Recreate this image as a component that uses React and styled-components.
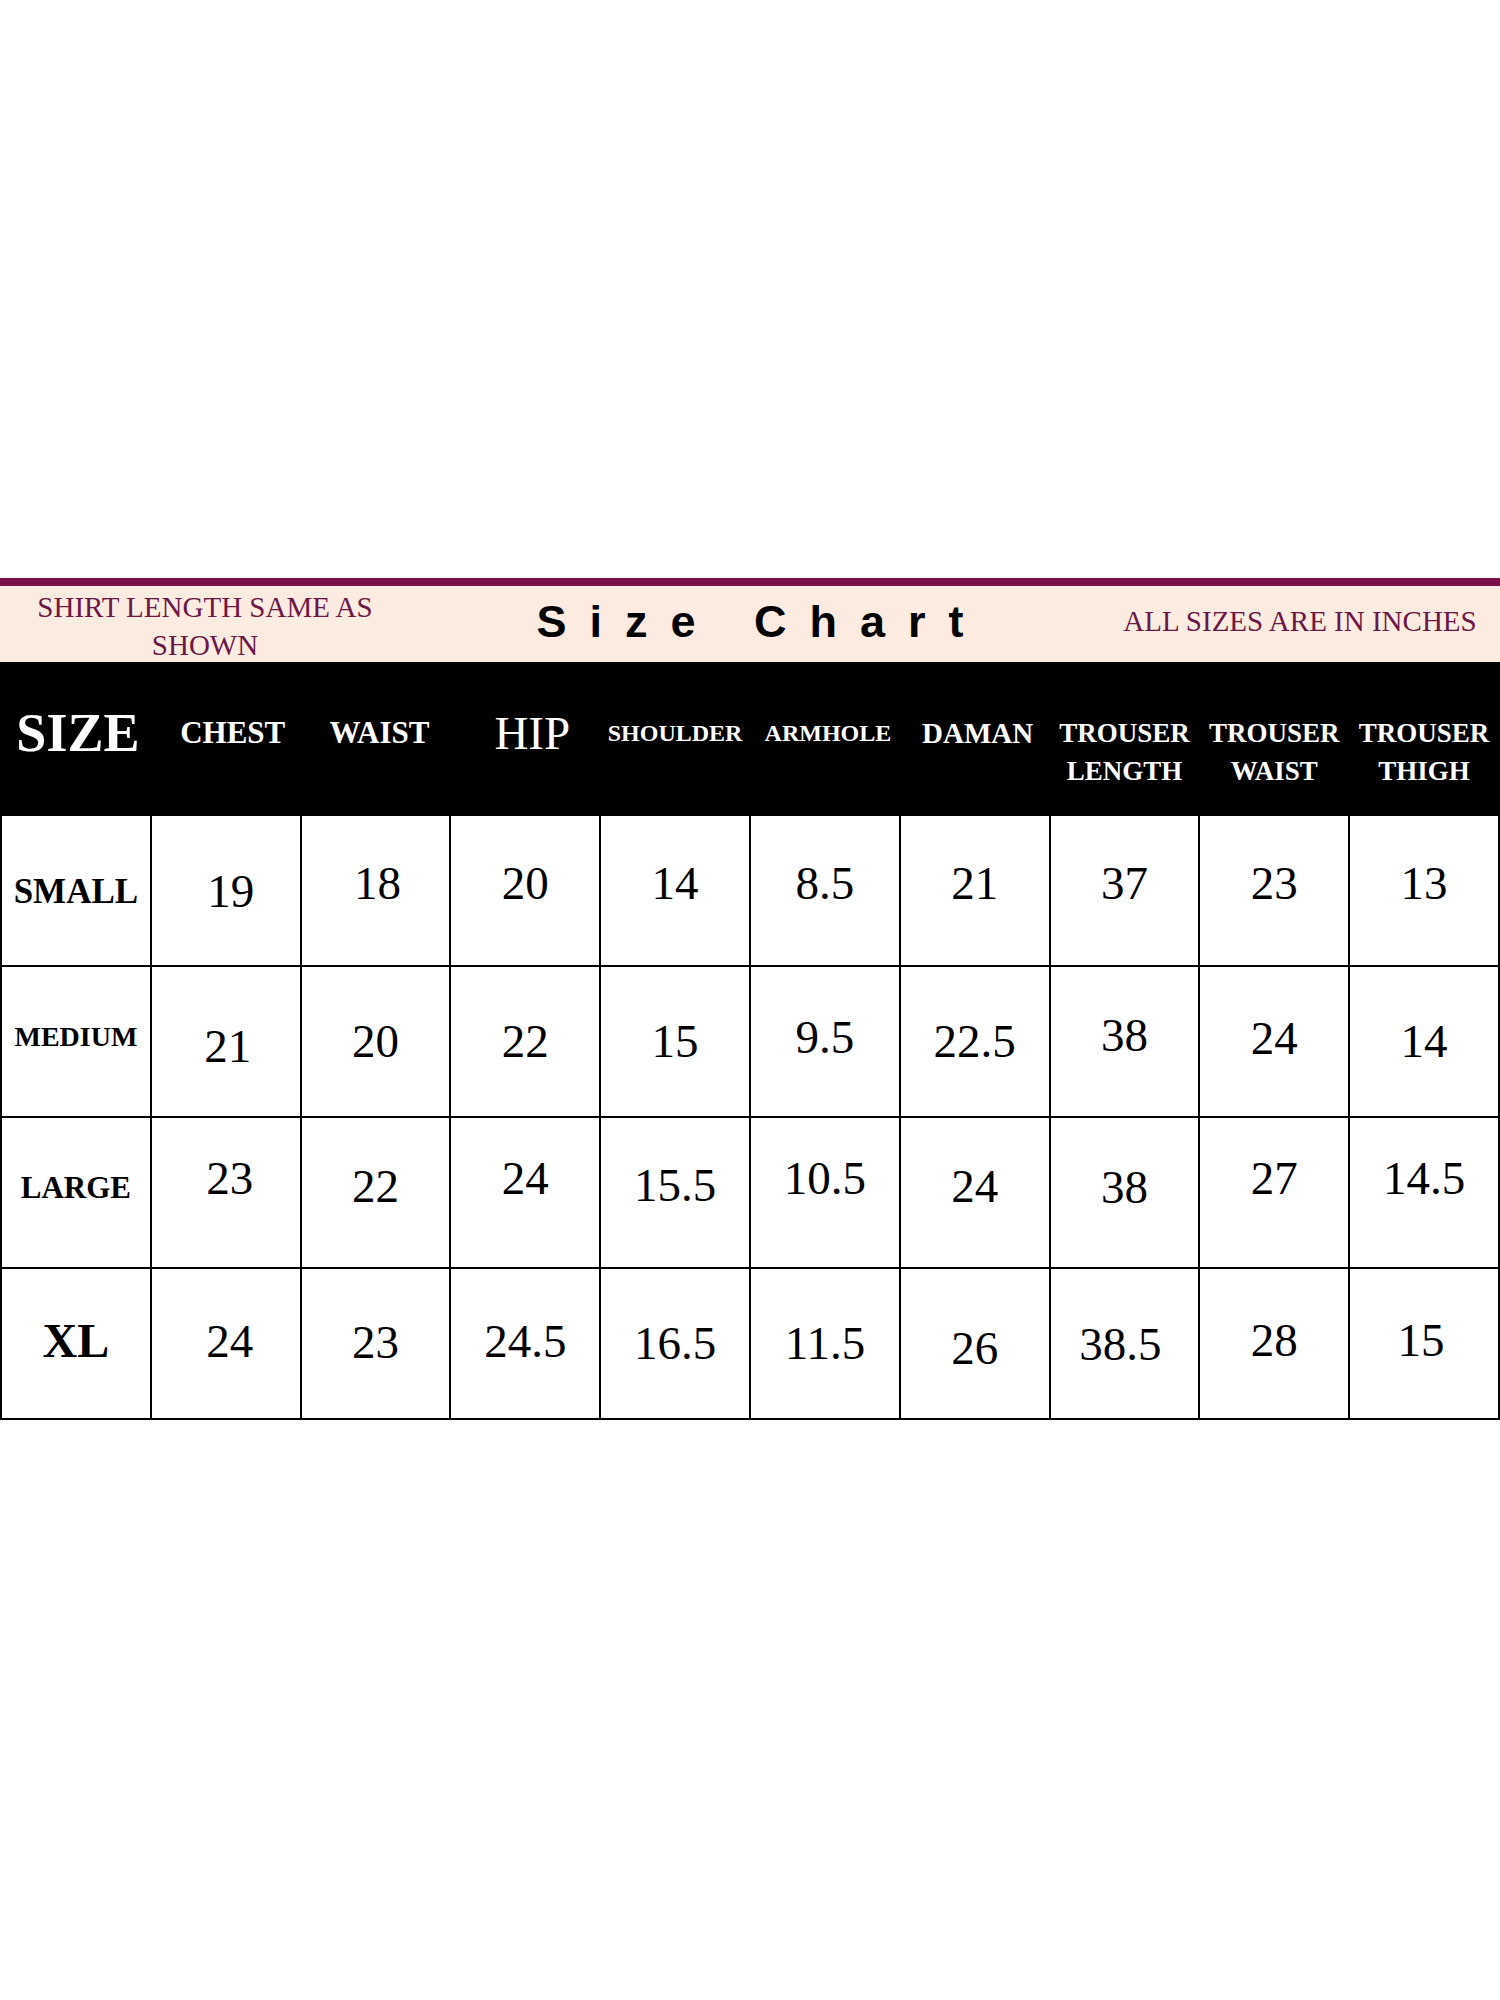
import React from 'react'
import styled, { createGlobalStyle } from 'styled-components'

const GlobalStyle = createGlobalStyle`
  html, body {
    margin: 0;
    padding: 0;
    background: #ffffff;
  }
  body {
    font-family: 'Liberation Serif', 'Times New Roman', serif;
  }
`

const purple = '#7b0f4b'
const ink = '#6d1747'

const Page = styled.div`
  width: 1500px;
  padding-top: 578px;
  padding-bottom: 580px;
`

const TopRule = styled.div`
  height: 8px;
  background: ${purple};
`

const Banner = styled.div`
  display: grid;
  grid-template-columns: 410px 1fr 400px;
  grid-template-rows: 76px;
  align-items: center;
  height: 76px;
  background: #fcebe0;
`

const Note = styled.div`
  text-align: center;
  font-family: 'Liberation Serif', 'Times New Roman', serif;
  font-size: 29px;
  line-height: 38px;
  color: ${ink};
  transform: translateY(${(p) => p.$shift || 0}px);
`

const Title = styled.div`
  text-align: center;
  padding-left: 13px;
  font-family: 'Liberation Sans', Arial, sans-serif;
  font-weight: 700;
  font-size: 45px;
  letter-spacing: 23px;
  color: #000;
  line-height: 1;
  padding-bottom: 6px;
`

const Table = styled.div`
  display: grid;
  grid-template-columns: repeat(10, 1fr);
  grid-template-rows: 152px repeat(4, 149px);
  gap: 2px;
  padding: 0 2px 2px 2px;
  background: #000;
`

const HeadCell = styled.div`
  display: flex;
  justify-content: center;
  align-items: flex-start;
  padding-top: 52px;
  background: #000;
`

const HeadLabel = styled.span`
  display: block;
  text-align: center;
  color: #fff;
  font-family: 'Liberation Serif', 'Times New Roman', serif;
  font-size: ${(p) => p.$size}px;
  font-weight: ${(p) => (p.$bold ? 700 : 400)};
  line-height: 38px;
  white-space: nowrap;
  transform: translateX(${(p) => p.$dx || 0}px);
`

const Cell = styled.div`
  display: flex;
  justify-content: center;
  align-items: center;
  background: #fff;
`

const RowLabel = styled.span`
  font-family: 'Liberation Serif', 'Times New Roman', serif;
  font-weight: 700;
  font-size: ${(p) => p.$size}px;
  color: #000;
  transform: translateY(${(p) => p.$dy || 0}px);
`

const Value = styled.span`
  font-family: 'Liberation Serif', 'Times New Roman', serif;
  font-size: 47px;
  color: #000;
  transform: translate(${(p) => p.$dx || 0}px, ${(p) => p.$dy || 0}px);
`

const headers = [
  { lines: ['SIZE'], size: 54, bold: true, dx: 2 },
  { lines: ['CHEST'], size: 31, bold: true, dx: 7 },
  { lines: ['WAIST'], size: 31, bold: true, dx: 4 },
  { lines: ['HIP'], size: 47, bold: false, dx: 7 },
  { lines: ['SHOULDER'], size: 24, bold: true },
  { lines: ['ARMHOLE'], size: 24, bold: true, dx: 3 },
  { lines: ['DAMAN'], size: 29, bold: true, dx: 3 },
  { lines: ['TROUSER', 'LENGTH'], size: 27, bold: true },
  { lines: ['TROUSER', 'WAIST'], size: 27, bold: true },
  { lines: ['TROUSER', 'THIGH'], size: 27, bold: true },
]

// [value, dy, dx]
const rows = [
  {
    label: 'SMALL',
    size: 35,
    dy: 1,
    values: [
      ['19', 0, 5],
      ['18', -8, 2],
      ['20', -8],
      ['14', -8],
      ['8.5', -8],
      ['21', -8],
      ['37', -8],
      ['23', -8],
      ['13', -8],
    ],
  },
  {
    label: 'MEDIUM',
    size: 28,
    dy: -5,
    values: [
      ['21', 4, 2],
      ['20', -1],
      ['22', -1],
      ['15', -1],
      ['9.5', -5],
      ['22.5', -1],
      ['38', -7],
      ['24', -4],
      ['14', -1],
    ],
  },
  {
    label: 'LARGE',
    size: 31,
    dy: -5,
    values: [
      ['23', -15, 4],
      ['22', -7],
      ['24', -15],
      ['15.5', -8],
      ['10.5', -15],
      ['24', -7],
      ['38', -6],
      ['27', -15],
      ['14.5', -15],
    ],
  },
  {
    label: 'XL',
    size: 48,
    dy: -3,
    values: [
      ['24', -3, 4],
      ['23', -2],
      ['24.5', -3],
      ['16.5', -1],
      ['11.5', -1],
      ['26', 4],
      ['38.5', 0, -4],
      ['28', -4],
      ['15', -4, -3],
    ],
  },
]

export default function App() {
  return (
    <>
      <GlobalStyle />
      <Page>
        <TopRule />
        <Banner>
          <Note $shift={2}>
            SHIRT LENGTH SAME AS
            <br />
            SHOWN
          </Note>
          <Title>Size Chart</Title>
          <Note $shift={-3}>ALL SIZES ARE IN INCHES</Note>
        </Banner>
        <Table>
          {headers.map((h, i) => (
            <HeadCell key={'h' + i}>
              <HeadLabel $size={h.size} $bold={h.bold} $dx={h.dx}>
                {h.lines.map((line, j) => (
                  <React.Fragment key={j}>
                    {j > 0 && <br />}
                    {line}
                  </React.Fragment>
                ))}
              </HeadLabel>
            </HeadCell>
          ))}
          {rows.map((row) => (
            <React.Fragment key={row.label}>
              <Cell>
                <RowLabel $size={row.size} $dy={row.dy}>
                  {row.label}
                </RowLabel>
              </Cell>
              {row.values.map(([v, dy, dx], k) => (
                <Cell key={row.label + k}>
                  <Value $dy={dy} $dx={dx}>
                    {v}
                  </Value>
                </Cell>
              ))}
            </React.Fragment>
          ))}
        </Table>
      </Page>
    </>
  )
}
